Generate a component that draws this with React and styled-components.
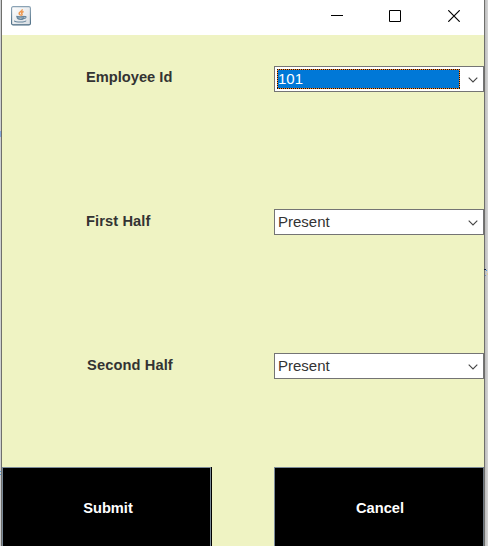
import React from "react";
import styled, { createGlobalStyle } from "styled-components";

const GlobalStyle = createGlobalStyle`
  * { box-sizing: border-box; }
  body { margin: 0; overflow: hidden; background: #d2d2d2; }
  button { font: inherit; }
`;

const Desktop = styled.div`
  position: relative;
  width: 488px;
  height: 546px;
  display: grid;
  grid-template-columns: 1px 484px 3px;
  background: #d0d2d4;
  font-family: "Liberation Sans", Arial, sans-serif;
  font-size: 15px;
  color: #333;
`;

const Shade = styled.div`
  background: ${(p) => (p.$right ? "linear-gradient(90deg, #bcbcbc, #d6d6d6)" : "#cdcfd1")};
`;

const Mark = styled.i`
  position: absolute;
  left: ${(p) => p.$x}px;
  top: ${(p) => p.$y}px;
  width: ${(p) => p.$w}px;
  height: ${(p) => p.$h}px;
  background: ${(p) => p.$color};
`;

const Window = styled.main`
  display: flex;
  flex-direction: column;
  height: 546px;
  border: solid #6f6f6c;
  border-width: 0 1px;
  background: #eff3c3;
`;

const TitleBar = styled.header`
  display: flex;
  justify-content: space-between;
  height: 35px;
  background: #fff;
`;

const AppIcon = styled.svg`
  display: block;
  width: 20px;
  height: 20px;
  margin: 6px 0 0 9px;
`;

const WindowControls = styled.div`
  display: flex;
`;

const ControlButton = styled.button`
  width: ${(p) => p.$width}px;
  height: 32px;
  padding: 0;
  border: 0;
  background: none;
  display: grid;
  place-items: center;
  svg { display: block; width: 12px; height: 12px; }
`;

const Form = styled.form`
  flex: 1;
  display: flex;
  flex-direction: column;
`;

const Field = styled.div`
  display: grid;
  grid-template-columns: 272px 210px;
  height: ${(p) => p.$height}px;
  padding-top: 31px;
`;

const Label = styled.span`
  height: 22px;
  padding-left: ${(p) => p.$indent}px;
  font-size: 14.67px;
  font-weight: 700;
  line-height: 22px;
  white-space: nowrap;
  letter-spacing: ${(p) => p.$spacing || 0}px;
  margin-top: ${(p) => p.$drop || 0}px;
`;

const Combo = styled.div`
  display: grid;
  grid-template-columns: 183px 1fr;
  height: 26px;
  padding: 2px;
  border: 1px solid #747474;
  background: #fff;
`;

const Value = styled.div`
  position: relative;
  height: 20px;
  padding-left: 1px;
  line-height: 20px;
  color: ${(p) => (p.$selected ? "#fff" : "#333")};
  background: ${(p) => (p.$selected ? "#0078d7" : "transparent")};
`;

const FocusRing = styled.svg`
  position: absolute;
  inset: 0;
  width: 183px;
  height: 20px;
`;

const Arrow = styled.svg`
  display: block;
  width: 10px;
  height: 6px;
  margin: 8px 0 0 8px;
`;

const Actions = styled.div`
  display: grid;
  grid-template-columns: 210px 210px;
  column-gap: 62px;
  height: 79px;
`;

const ActionButton = styled.button`
  padding: 3px ${(p) => (p.$edge ? 0 : 1)}px 0 ${(p) => (p.$edge ? 3 : 4)}px;
  border: 0;
  background: #000;
  box-shadow: inset 1px 1px #7b8a99;
  border-right: 1px solid ${(p) => (p.$edge ? "#6c7680" : "#000")};
  color: #fff;
  font-size: 14.67px;
  font-weight: 700;
  position: relative;
`;

const ButtonRule = styled.span`
  position: absolute;
  top: 0;
  right: 0;
  width: 1px;
  height: 79px;
  background: #7b8a99;
`;

function JavaIcon() {
  return (
    <AppIcon viewBox="0 0 20 20">
      <defs>
        <linearGradient id="paper" x1="0" y1="0" x2="1" y2="1">
          <stop stopColor="#fff" />
          <stop offset="1" stopColor="#d7dce1" />
        </linearGradient>
        <linearGradient id="frame" x1="0" y1="0" x2="0" y2="1">
          <stop stopColor="#8ba3b5" />
          <stop offset="1" stopColor="#45677f" />
        </linearGradient>
      </defs>
      <rect x=".6" y=".6" width="18.8" height="18.3" rx="1.5" fill="url(#paper)" stroke="url(#frame)" strokeWidth="1.1" />
      <path d="M11.2 3.2c.8 2-3.6 2.7-3.1 4.4.2.9 1.4 1 1.3 2M12.6 5.5c-2.4 1-2.3 1.7-1.6 2.4.4.6-.1 1.3-.8 1.6" fill="none" stroke="#ed9347" strokeWidth="1.4" />
      <path d="M5.3 10.3c1 .6 7.2.6 8.2 0M6 11c.2 2.4 1.3 2.5 3.6 2.5 2.2 0 3.2-.5 3.5-2.4M6.8 12h6M13.4 10.5c2.3-.5 2.2 1.8-.4 2M3.8 14.6c-1.1 1 2.8 1.4 5.7 1.4s5.2-.4 5.6-1.4" fill="none" stroke="#66859c" strokeWidth="1.1" />
    </AppIcon>
  );
}

function ComboBox({ value, selected }) {
  return (
    <Combo>
      <Value $selected={selected}>
        {value}
        {selected && (
          <FocusRing viewBox="0 0 183 20">
            <rect x=".5" y=".5" width="182" height="19" fill="none" stroke="#ff8728" />
            <path d="M0 .5H183M0 19.5H183M.5 0V20M182.5 0V20" stroke="#111" strokeDasharray="1 1" shapeRendering="crispEdges" />
          </FocusRing>
        )}
      </Value>
      <Arrow viewBox="0 0 10 6">
        <path d="M.7.7 5 5 9.3.7" fill="none" stroke="#454545" strokeWidth="1.1" />
      </Arrow>
    </Combo>
  );
}

export default function App() {
  return (
    <>
      <GlobalStyle />
      <Desktop>
        <Shade />
        <Window>
          <TitleBar>
            <JavaIcon />
            <WindowControls>
              <ControlButton $width={58} type="button" aria-label="Minimize">
                <svg viewBox="0 0 12 12"><path d="M0 5.5h12" stroke="#000" /></svg>
              </ControlButton>
              <ControlButton $width={58} type="button" aria-label="Maximize">
                <svg viewBox="0 0 12 12"><path d="M.5.5h11v11H.5z" fill="none" stroke="#000" /></svg>
              </ControlButton>
              <ControlButton $width={60} type="button" aria-label="Close">
                <svg viewBox="0 0 12 12"><path d="m.3.3 11.4 11.4m0-11.4L.3 11.7" stroke="#000" strokeWidth="1.2" /></svg>
              </ControlButton>
            </WindowControls>
          </TitleBar>
          <Form>
            <Field $height={143}>
              <Label $indent={84}>Employee Id</Label>
              <ComboBox value="101" selected />
            </Field>
            <Field $height={144}>
              <Label $indent={84} $spacing={0.1} $drop={1}>First Half</Label>
              <ComboBox value="Present" />
            </Field>
            <Field $height={145}>
              <Label $indent={85} $spacing={0.1} $drop={1}>Second Half</Label>
              <ComboBox value="Present" />
            </Field>
            <Actions>
              <ActionButton type="button">Submit<ButtonRule /></ActionButton>
              <ActionButton type="button" $edge>Cancel</ActionButton>
            </Actions>
          </Form>
        </Window>
        <Shade $right />
        <Mark $x={0} $y={131} $w={1} $h={6} $color="#86a8dc" />
        <Mark $x={0} $y={471} $w={1} $h={1} $color="#5c9bd3" />
        <Mark $x={0} $y={474} $w={1} $h={1} $color="#5c9bd3" />
        <Mark $x={484} $y={269} $w={2} $h={1} $color="#101c40" />
        <Mark $x={486} $y={270} $w={1} $h={1} $color="#4a9be0" />
        <Mark $x={487} $y={273} $w={1} $h={2} $color="#e6cf9c" />
        <Mark $x={485} $y={275} $w={1} $h={1} $color="#6c94c0" />
      </Desktop>
    </>
  );
}
